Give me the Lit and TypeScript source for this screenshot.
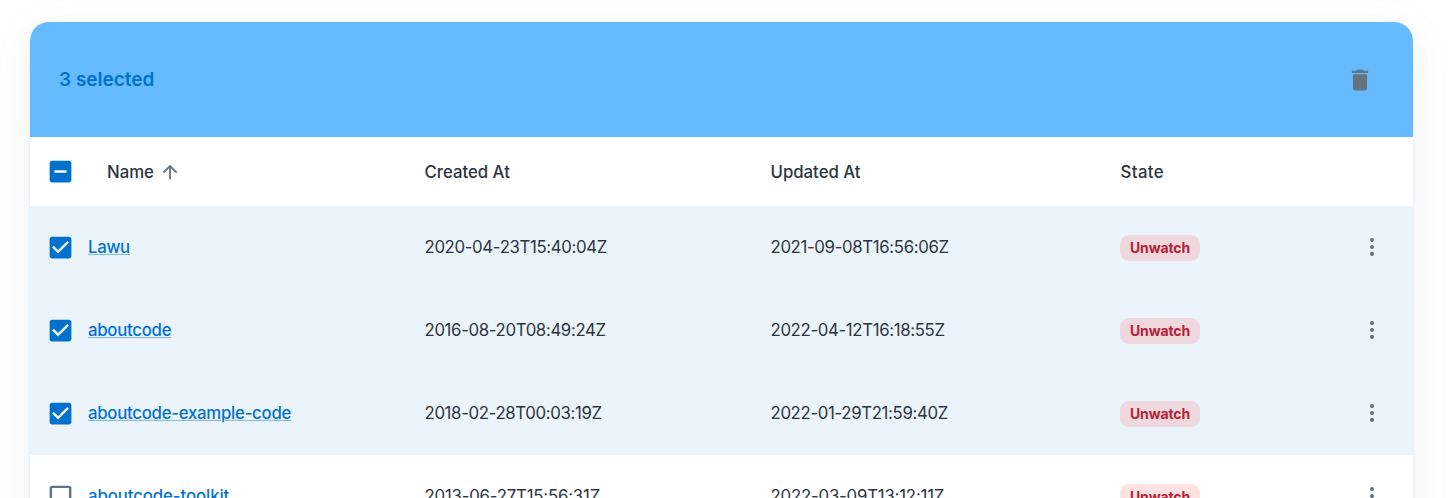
import { LitElement, html, css } from "lit";
import { customElement, property } from "lit/decorators.js";

interface Repo {
  name: string;
  created: string;
  updated: string;
  selected: boolean;
}

const repos: Repo[] = [
  { name: "Lawu", created: "2020-04-23T15:40:04Z", updated: "2021-09-08T16:56:06Z", selected: true },
  { name: "aboutcode", created: "2016-08-20T08:49:24Z", updated: "2022-04-12T16:18:55Z", selected: true },
  { name: "aboutcode-example-code", created: "2018-02-28T00:03:19Z", updated: "2022-01-29T21:59:40Z", selected: true },
  { name: "aboutcode-toolkit", created: "2013-06-27T15:56:31Z", updated: "2022-03-09T13:12:11Z", selected: false },
];

const icons: Record<string, string> = {
  checked:
    "M19 3H5c-1.11 0-2 .9-2 2v14c0 1.1.89 2 2 2h14c1.11 0 2-.9 2-2V5c0-1.1-.89-2-2-2zm-9 14l-5-5 1.41-1.41L10 14.17l7.59-7.59L19 8l-9 9z",
  unchecked:
    "M19 5v14H5V5h14m0-2H5c-1.1 0-2 .9-2 2v14c0 1.1.9 2 2 2h14c1.1 0 2-.9 2-2V5c0-1.1-.9-2-2-2z",
  mixed:
    "M19 3H5c-1.1 0-2 .9-2 2v14c0 1.1.9 2 2 2h14c1.1 0 2-.9 2-2V5c0-1.1-.9-2-2-2zm-2 10H7v-2h10v2z",
  trash:
    "M6 19c0 1.1.9 2 2 2h8c1.1 0 2-.9 2-2V7H6v12zM19 4h-3.5l-1-1h-5l-1 1H5v2h14V4z",
  up: "M4 12l1.41 1.41L11 7.83V20h2V7.83l5.58 5.59L20 12l-8-8-8 8z",
  more:
    "M12 4.35a1.75 1.75 0 1 0 0 3.5 1.75 1.75 0 0 0 0-3.5zM12 10.25a1.75 1.75 0 1 0 0 3.5 1.75 1.75 0 0 0 0-3.5zM12 16.15a1.75 1.75 0 1 0 0 3.5 1.75 1.75 0 0 0 0-3.5z",
};

@customElement("ui-icon")
export class UiIcon extends LitElement {
  static styles = css`
    :host { display: inline-block; width: 29px; height: 29px; flex: none; }
    svg { display: block; width: 100%; height: 100%; fill: currentColor; }
  `;
  @property() name = "checked";
  render() {
    return html`<svg viewBox="0 0 24 24"><path d=${icons[this.name]} /></svg>`;
  }
}

@customElement("app-root")
export class AppRoot extends LitElement {
  static styles = css`
    :host {
      display: block;
      box-sizing: border-box;
      height: 498px;
      overflow: hidden;
      padding: 22px 39px 0 30px;
      background: #fff;
      color: #212b36;
      font-family: Inter, "Liberation Sans", sans-serif;
      font-size: 16.8px;
    }
    .card {
      height: 600px;
      border-radius: 19px;
      background: #fff;
      box-shadow: 0 0 2px rgba(145, 158, 171, 0.24), 0 14px 29px -5px rgba(145, 158, 171, 0.14),
        0 8px 44px rgba(145, 171, 158, 0.07);
    }
    .toolbar {
      display: flex;
      align-items: center;
      justify-content: space-between;
      box-sizing: border-box;
      height: 115px;
      padding: 0 39px 0 29px;
      border-radius: 19px 19px 0 0;
      background: #66bbff;
      color: #0072ce;
    }
    .count { font-size: 19px; font-weight: 560; letter-spacing: 0; }
    .trash { width: 28px; height: 28px; color: #637381; }
    .row {
      display: grid;
      grid-template-columns: 58px 336.5px 346px 349.5px 1fr 55px;
      align-items: center;
      box-sizing: border-box;
      height: 83px;
      border-bottom: 1px solid transparent;
    }
    .row.selected { background: #ebf3fb; }
    .row.rule { border-bottom-color: #f1f3f5; }
    .head { height: 69px; font-weight: 540; border: 0; }
    .title { padding-top: 1.4px; letter-spacing: -0.02px; color: #2b3540; }
    .state { letter-spacing: 0.4px; padding-left: 0.5px; }
    .box { padding-left: 16px; display: flex; color: #637381; }
    .box.on { color: #0072ce; }
    .sort { display: flex; align-items: center; padding-left: 19px; gap: 5px; }
    .arrow { width: 22px; height: 22px; color: #637381; }
    .date { letter-spacing: -0.35px; color: #2b3540; }
    .link {
      color: #0072ce;
      font-weight: 540;
      letter-spacing: -0.27px;
      text-decoration: underline;
      text-decoration-color: rgba(0, 114, 206, 0.45);
      text-decoration-thickness: 1px;
      text-underline-offset: 1px;
    }
    .row:last-child .link { letter-spacing: -0.1px; }
    .row:last-child .date { letter-spacing: -0.2px; }
    .badge {
      display: inline-flex;
      align-items: center;
      justify-content: center;
      width: 80px;
      height: 26px;
      margin-top: 1px;
      border-radius: 9px;
      background: rgba(255, 72, 66, 0.16);
      color: #b72136;
      font-size: 14px;
      font-weight: 700;
      letter-spacing: -0.1px;
    }
    .more { display: flex; color: #637381; }
    .more ui-icon { width: 28px; height: 28px; }
  `;

  render() {
    return html`
      <div class="card">
        <div class="toolbar">
          <span class="count">3 selected</span>
          <ui-icon class="trash" name="trash"></ui-icon>
        </div>
        <div class="row head">
          <span class="box on"><ui-icon name="mixed"></ui-icon></span>
          <span class="sort"><span class="title">Name</span><ui-icon class="arrow" name="up"></ui-icon></span>
          <span class="title">Created At</span>
          <span class="title">Updated At</span>
          <span class="title state">State</span>
        </div>
        ${repos.map(
          (r, i) => html`
            <div class="row ${r.selected ? "selected" : ""} ${i === 0 ? "rule" : ""}">
              <span class="box ${r.selected ? "on" : ""}">
                <ui-icon name=${r.selected ? "checked" : "unchecked"}></ui-icon>
              </span>
              <span><a class="link">${r.name}</a></span>
              <span class="date">${r.created}</span>
              <span class="date">${r.updated}</span>
              <span><span class="badge">Unwatch</span></span>
              <span class="more"><ui-icon name="more"></ui-icon></span>
            </div>
          `
        )}
      </div>
    `;
  }
}
